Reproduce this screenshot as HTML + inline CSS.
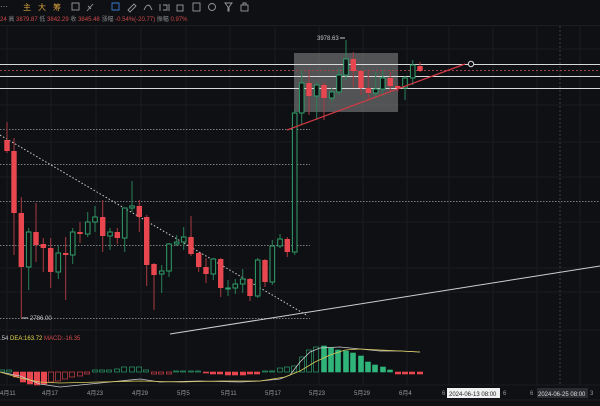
<html><head><style>
body{margin:0;background:#0f1014;width:600px;height:406px;overflow:hidden;font-family:"Liberation Sans","Noto Sans CJK SC",sans-serif}
svg{position:absolute;left:0;top:0}
</style></head><body>
<svg width="600" height="406" viewBox="0 0 600 406" font-family="Liberation Sans, Noto Sans CJK SC, sans-serif">
<rect width="600" height="406" fill="#0f1014"/>
<line x1="0" y1="25.5" x2="600" y2="25.5" stroke="#1c1d22"/>
<!-- grid -->
<g stroke="#1b1c21" stroke-width="1">
<line x1="7" y1="26" x2="7" y2="385"/><line x1="51" y1="26" x2="51" y2="385"/><line x1="96" y1="26" x2="96" y2="385"/><line x1="141" y1="26" x2="141" y2="385"/><line x1="186" y1="26" x2="186" y2="385"/><line x1="230" y1="26" x2="230" y2="385"/><line x1="275" y1="26" x2="275" y2="385"/><line x1="319" y1="26" x2="319" y2="385"/><line x1="363" y1="26" x2="363" y2="385"/><line x1="407" y1="26" x2="407" y2="385"/><line x1="449" y1="26" x2="449" y2="385"/><line x1="493" y1="26" x2="493" y2="385"/><line x1="537" y1="26" x2="537" y2="385"/><line x1="580" y1="26" x2="580" y2="385"/>
<line x1="0" y1="49" x2="600" y2="49"/><line x1="0" y1="105" x2="600" y2="105"/><line x1="0" y1="142" x2="600" y2="142"/><line x1="0" y1="177" x2="600" y2="177"/><line x1="0" y1="222" x2="600" y2="222"/><line x1="0" y1="268" x2="600" y2="268"/><line x1="0" y1="292" x2="600" y2="292"/><line x1="0" y1="330" x2="600" y2="330"/><line x1="0" y1="385" x2="600" y2="385"/>
</g>
<line x1="560" y1="26" x2="560" y2="385" stroke="#3a3b40" stroke-dasharray="2,2"/>
<!-- horizontal drawn lines -->
<g stroke="#7c7d82" stroke-dasharray="1.5,1.5" stroke-width="1">
<line x1="0" y1="129.5" x2="310" y2="129.5"/><line x1="0" y1="164.5" x2="310" y2="164.5"/><line x1="0" y1="201.5" x2="600" y2="201.5"/><line x1="0" y1="245.5" x2="310" y2="245.5"/><line x1="0" y1="318.5" x2="310" y2="318.5"/>
</g>
<rect x="294" y="53" width="104" height="59" fill="#8a8a8a" fill-opacity="0.55"/>
<g stroke="#d8d8d8" stroke-width="1">
<line x1="0" y1="64.5" x2="600" y2="64.5"/><line x1="0" y1="76.5" x2="600" y2="76.5"/><line x1="0" y1="88.5" x2="600" y2="88.5"/>
</g>
<line x1="0" y1="70.5" x2="600" y2="70.5" stroke="#a0444a" stroke-dasharray="2,2"/>
<line x1="0" y1="135" x2="308" y2="316" stroke="#cfcfcf" stroke-dasharray="1.5,2"/>
<line x1="170" y1="334" x2="600" y2="266" stroke="#cfcfcf"/>
<text x="30" y="320" fill="#c8c8c8" font-size="6">2786.00</text>
<line x1="22" y1="318" x2="28" y2="318" stroke="#c8c8c8"/>
<text x="317" y="40" fill="#c8c8c8" font-size="6">3978.63</text>
<line x1="340" y1="38" x2="345" y2="38" stroke="#c8c8c8"/>
<!-- candles -->
<g id="c" stroke-width="1"></g>
<line x1="287" y1="130" x2="465" y2="64" stroke="#d43a44" stroke-width="1.2"/>
<circle cx="471" cy="64" r="2.7" fill="#0f1014" stroke="#e0e0e0" stroke-width="1"/>
<!-- macd -->
<g id="m"></g>
<polyline fill="none" stroke="#c9c9c9" stroke-width="0.8" points="0,372 20,376 40,384 60,387 80,385 120,381 140,379 160,382 200,381 240,382 260,381 280,379 290,375 300,362 310,352 320,348 340,347 360,349 380,351 400,351 420,352"/>
<polyline fill="none" stroke="#d6c95a" stroke-width="0.8" points="0,372 20,378 40,382 60,383 100,382 140,381 180,382 220,381 260,381 285,377 300,371 315,362 330,355 345,350 360,349 380,350 400,351 420,352"/>
<text x="0" y="340" font-size="6"><tspan fill="#c8c8c8">.54 </tspan><tspan fill="#e8d84a">DEA:163.72</tspan><tspan fill="#d04a4a"> MACD:-16.35</tspan></text>
<!-- axis -->
<g fill="#9a9a9a" font-size="6">
<text x="0" y="395">4月11</text><text x="42" y="395">4月17</text><text x="87" y="395">4月23</text><text x="132" y="395">4月29</text><text x="177" y="395">5月5</text><text x="221" y="395">5月11</text><text x="265" y="395">5月17</text><text x="309" y="395">5月23</text><text x="354" y="395">5月29</text><text x="399" y="395">6月4</text><text x="442" y="395">6</text><text x="503" y="395">6</text><text x="530" y="395">6</text><text x="590" y="395">3</text>
</g>
<rect x="447" y="388" width="53" height="10" fill="#f0f0f0"/>
<text x="449" y="396" font-size="6" fill="#222">2024-06-13 08:00</text>
<rect x="537" y="388" width="51" height="10" fill="#2a2b30"/>
<text x="538" y="396" font-size="6" fill="#ddd">2024-06-25 08:00</text>
<line x1="0" y1="400" x2="600" y2="400" stroke="#1c1d22"/>
<!-- toolbar -->
<text x="0" y="9" fill="#aaa" font-size="8">···</text>
<g fill="#d4a03a" font-size="8"><text x="23" y="10">主</text><text x="38" y="10">大</text><text x="53" y="10">筹</text></g>
<g fill="none" stroke="#9a9a9a" stroke-width="0.9">
<rect x="72" y="3" width="7" height="7"/><path d="M87 11 L93 4 M88 6 L91 9"/>
<path d="M112 3 h7 v7 h-7 z" stroke="#3a7bd5"/>
<path d="M128 10 L134 4 L136 6 L130 12 z"/><path d="M144 10 Q147 3 150 6 L152 10"/>
<path d="M160 4 v7 M163 5 h4 v5 h-4 M169 4 v7"/><rect x="177" y="5" width="6" height="6"/><rect x="193" y="3" width="7" height="8"/>
<circle cx="212" cy="7" r="3.5"/><path d="M225 3 h7 l-3 4 v4 h-1 v-4 z"/><rect x="241" y="5" width="7" height="6"/><path d="M243 5 v-2 h3 v2"/>
</g>
<text x="0" y="21" font-size="6"><tspan fill="#d04a4a">24 </tspan><tspan fill="#888">高 </tspan><tspan fill="#d04a4a">3879.87 </tspan><tspan fill="#888">低 </tspan><tspan fill="#d04a4a">3842.29 </tspan><tspan fill="#888">收 </tspan><tspan fill="#d04a4a">3845.48 </tspan><tspan fill="#888">涨幅 </tspan><tspan fill="#d04a4a">-0.54%(-20.77) </tspan><tspan fill="#888">振幅 </tspan><tspan fill="#d04a4a">0.97%</tspan></text>
</svg>
<script>
var d=[[7,'r',140,151,122,153],[14,'r',151,213,138,255],[21.3,'r',213,267,197,318],[28.7,'g',232,267,228,290],[36,'r',232,245,203,262],[43.3,'r',244,248,238,272],[50.7,'r',248,272,238,288],[58.3,'g',253,272,246,279],[65.7,'r',253,255,237,300],[72.7,'g',232,255,228,264],[80,'r',232,234,222,243],[87.7,'g',222,234,212,237],[95,'g',217,222,206,232],[102.7,'r',217,236,200,252],[110,'g',232,236,228,250],[117.3,'r',232,238,228,244],[124.7,'g',208,238,208,252],[132,'g',206,208,181,212],[139.3,'r',206,217,200,232],[146.7,'r',217,265,215,286],[154,'r',264,275,263,310],[161.7,'g',271,274,265,293],[169,'g',244,271,243,277],[176.7,'g',242,244,235,246],[183.7,'g',237,242,227,250],[191,'r',237,254,216,256],[198.7,'r',253,267,252,272],[206,'r',267,274,258,283],[213.3,'g',259,274,258,280],[220.7,'r',259,288,258,297],[228,'g',288,289,280,296],[235.3,'g',284,288,279,294],[242.7,'g',279,284,269,293],[250,'r',279,296,278,301],[257.7,'g',260,296,258,298],[265,'r',260,282,259,287],[272.3,'g',246,282,240,285],[280,'g',239,246,234,248],[287.3,'r',239,252,237,257],[294.7,'g',113,252,110,255],[301.7,'g',83,113,70,125],[309,'r',83,96,70,115],[316.7,'g',85,96,82,120],[324,'r',85,98,82,120],[331.7,'g',92,98,88,102],[339,'g',75,92,68,95],[346,'g',59,75,40,80],[353.3,'r',59,71,52,87],[361,'r',71,88,70,95],[368.3,'r',88,93,70,100],[375.7,'g',89,93,72,98],[382.7,'g',78,89,70,96],[390.3,'r',78,86,72,92],[397.7,'r',86,88,85,92],[405,'g',78,88,76,100],[412.7,'g',65,78,60,85],[420,'r',66,71,62,72]];
var s='';d.forEach(function(c){var col=c[1]=='r'?'#e8474f':'#2f9e6a',wc=c[1]=='r'?'#a83a40':'#2a7f57';
s+='<line x1="'+c[0]+'" x2="'+c[0]+'" y1="'+c[4]+'" y2="'+c[5]+'" stroke="'+wc+'"/>';
var h=Math.max(1,c[3]-c[2]);
if(c[1]=='r')s+='<rect x="'+(c[0]-2.7)+'" y="'+c[2]+'" width="5.4" height="'+h+'" fill="'+col+'"/>';
else s+='<rect x="'+(c[0]-2.3)+'" y="'+c[2]+'" width="4.6" height="'+h+'" fill="#0f1014" stroke="'+col+'"/>';});
document.getElementById('c').innerHTML=s;
var m='';
var mb=[[2,2],[9,2],[16,-5],[23,-10],[30,-12],[37,-13],[44,-12],[51,-10],[58,-9],[65,-7],[72,-5],[80,-4],[87,-2],[95,2],[102,2],[109,2],[117,3],[124,5],[132,5],[139,5],[146,2],[154,-2],[161,-2],[169,-2],[176,1],[183,1],[191,1],[198,1],[206,-1],[213,-2],[220,-2],[228,-3],[235,-3],[243,-3],[250,-2],[257,-2],[265,1],[272,1],[280,4],[287,5],[294,6],[302,15],[309,22],[316,25],[324,26],[331,24],[338,22],[346,21],[353,19],[361,16],[368,10],[375,7],[383,5],[390,2],[398,-2],[405,-2],[412,-2],[420,-2]];
mb.forEach(function(b){var v=b[1],y=v>0?372-v:372,h=Math.abs(v);
if(v<0)m+='<rect x="'+(b[0]-2.7)+'" y="'+y+'" width="5.4" height="'+h+'" fill="'+(b[0]<50||b[0]>395||(b[0]>200&&b[0]<260)?'#e8474f':'#0f1014')+'" stroke="#e8474f" stroke-width="0.6"/>';
else{var f=b[0]>320&&b[0]<400;m+='<rect x="'+(b[0]-2.5)+'" y="'+y+'" width="5" height="'+h+'" fill="'+(f?'#2fb57a':'#0f1014')+'" stroke="#2fb57a" stroke-width="0.6"/>';}});
document.getElementById('m').innerHTML=m;
</script>
</body></html>
